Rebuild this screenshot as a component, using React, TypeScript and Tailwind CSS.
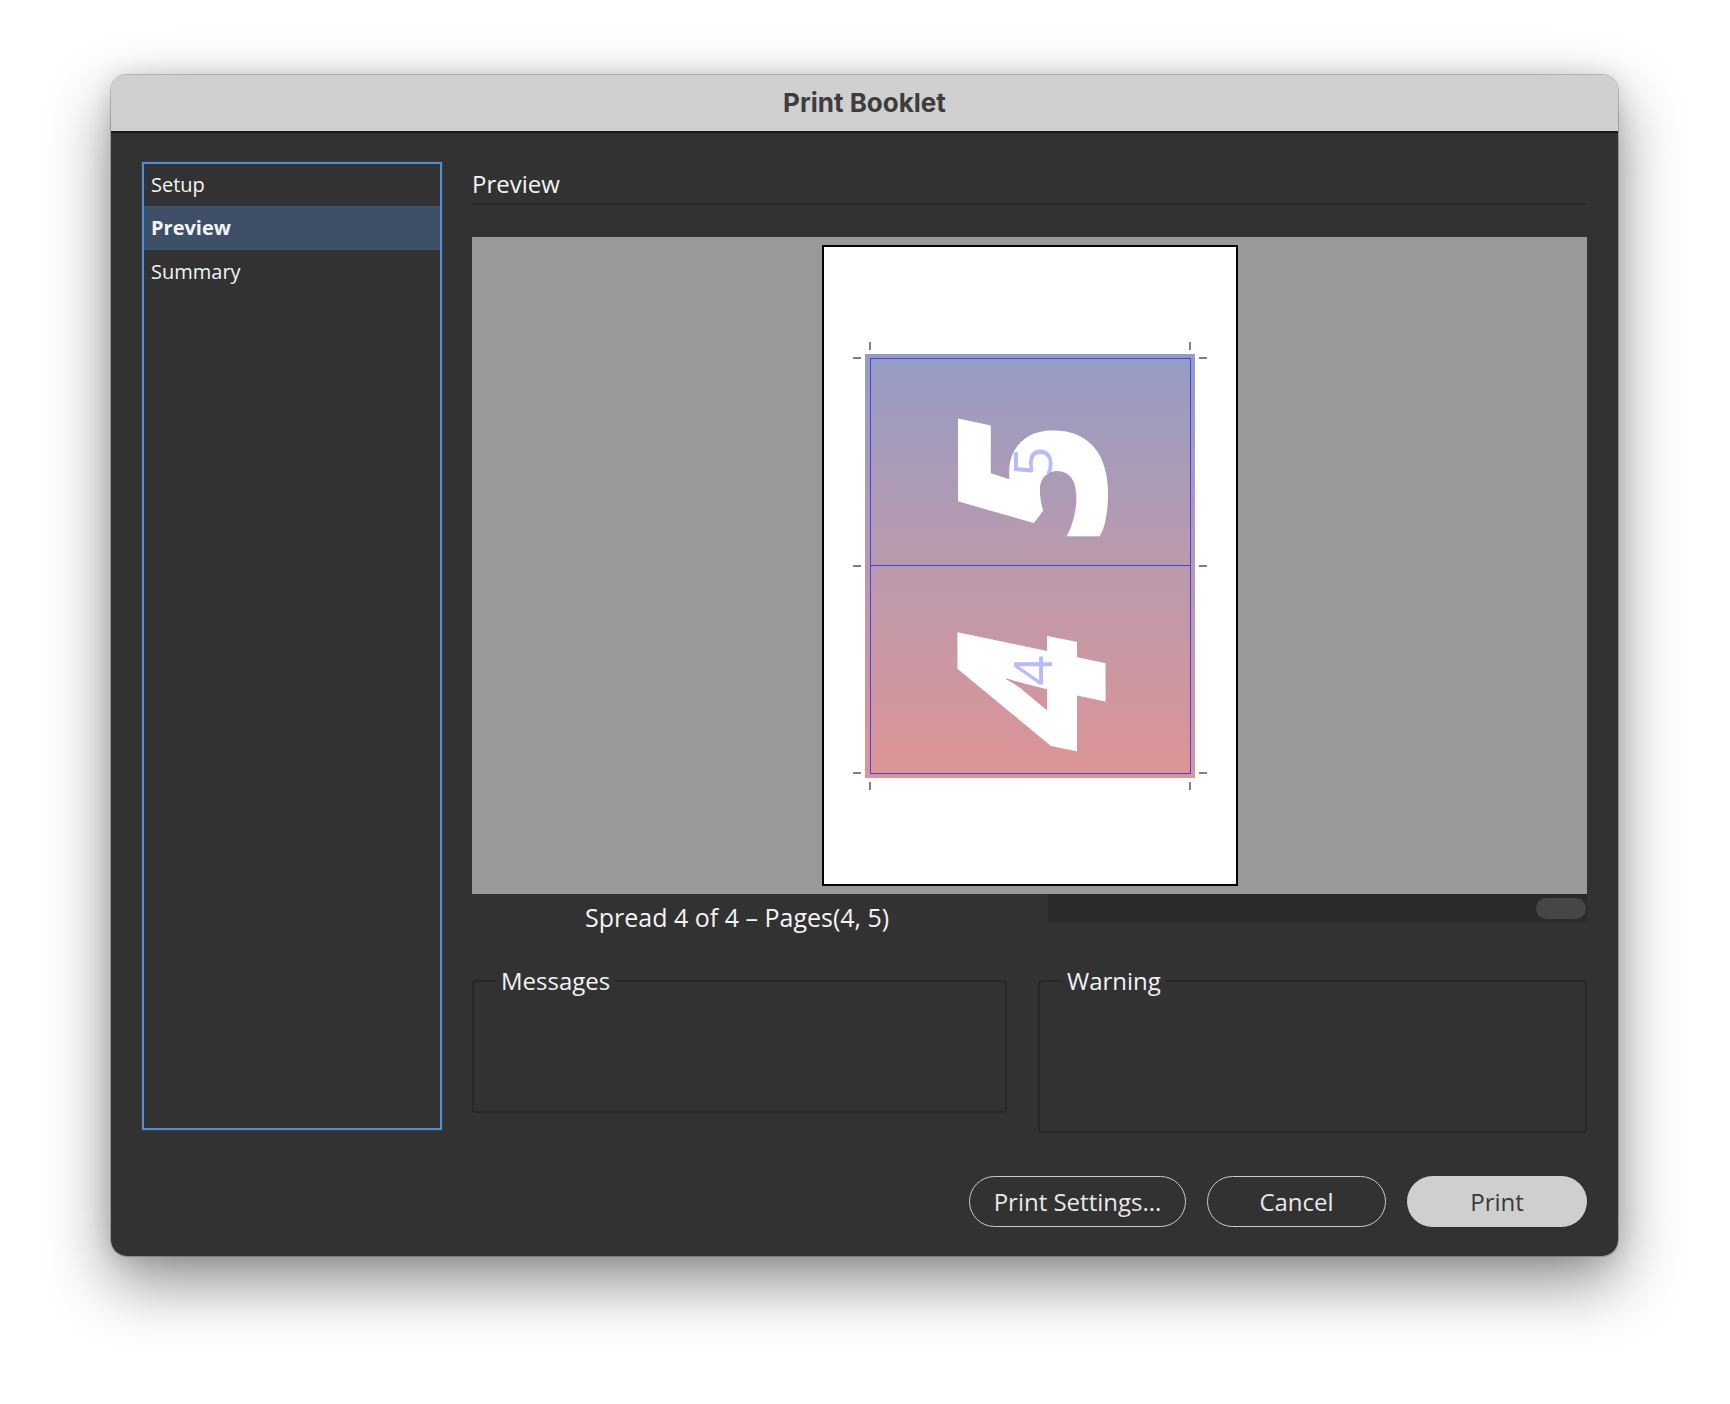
import React from "react";

const sideItems = [
  { label: "Setup", active: false, h: "h-[42px]" },
  { label: "Preview", active: true, h: "h-[44px]" },
  { label: "Summary", active: false, h: "h-[44px]" },
];

function CropMarks() {
  return (
    <>
      {/* vertical ticks, top and bottom */}
      <div className="absolute left-[4px] top-[-12px] w-[2px] h-[8px] bg-[#808080]" />
      <div className="absolute left-[324px] top-[-12px] w-[2px] h-[8px] bg-[#808080]" />
      <div className="absolute left-[4px] top-[428px] w-[2px] h-[8px] bg-[#808080]" />
      <div className="absolute left-[324px] top-[428px] w-[2px] h-[8px] bg-[#808080]" />
      {/* horizontal ticks, left and right */}
      <div className="absolute left-[-12px] top-[3px] w-[8px] h-[2px] bg-[#808080]" />
      <div className="absolute left-[-12px] top-[211px] w-[8px] h-[2px] bg-[#808080]" />
      <div className="absolute left-[-12px] top-[418px] w-[8px] h-[2px] bg-[#808080]" />
      <div className="absolute left-[334px] top-[3px] w-[8px] h-[2px] bg-[#808080]" />
      <div className="absolute left-[334px] top-[211px] w-[8px] h-[2px] bg-[#808080]" />
      <div className="absolute left-[334px] top-[418px] w-[8px] h-[2px] bg-[#808080]" />
    </>
  );
}

function SpreadPreview() {
  return (
    <div className="relative w-[330px] h-[424px] bg-linear-to-b from-[#959cc3] to-[#dd9495]">
      <CropMarks />
      {/* trim box + fold */}
      <div className="absolute left-[5px] right-[4px] top-[4px] bottom-[4px] border border-[#4242f2]" />
      <div className="absolute left-[5px] right-[4px] top-[211px] h-px bg-[#4242e6]" />

      <div className="relative h-[212px] flex items-center justify-center">
        <span className="-rotate-90 translate-x-[-3px] translate-y-[18px] text-[208px] leading-none font-extrabold italic text-white select-none">
          5
        </span>
        <span className="absolute inset-0 flex items-center justify-center">
          <span className="-rotate-90 translate-x-[2px] translate-y-[2px] text-[53px] leading-none text-[#9a9cff]/70">
            5
          </span>
        </span>
      </div>
      <div className="relative h-[212px] flex items-center justify-center">
        <span className="-rotate-90 translate-x-[-3px] translate-y-[18px] text-[208px] leading-none font-extrabold italic text-white select-none">
          4
        </span>
        <span className="absolute inset-0 flex items-center justify-center">
          <span className="-rotate-90 translate-x-[2px] translate-y-[-1px] text-[53px] leading-none text-[#9a9cff]/70">
            4
          </span>
        </span>
      </div>
    </div>
  );
}

function GroupBox({ title, className }: { title: string; className: string }) {
  return (
    <fieldset className={`border-2 border-[#272727] rounded-[4px] pl-[22px] ${className}`}>
      <legend className="px-[5px] text-[24px] leading-[24px] font-medium text-[#f2f2f2]">{title}</legend>
    </fieldset>
  );
}

export default function App() {
  return (
    <div className="min-h-screen w-full bg-white pl-[111px] pt-[75px] pb-[148px] font-['Open_Sans',sans-serif]">
      <div className="w-[1507px] h-[1181px] rounded-[16px] overflow-hidden flex flex-col shadow-[0_0_0_1px_rgba(0,0,0,0.2),0_26px_64px_rgba(0,0,0,0.45),0_0_24px_rgba(0,0,0,0.12)]">
        {/* Title bar */}
        <div className="h-[58px] shrink-0 bg-[#d0d0d0] border-b-2 border-[#1b1b1b] flex items-center justify-center">
          <span className="font-['Inter',sans-serif] text-[26px] font-bold text-[#3d3d3d] -translate-y-px">Print Booklet</span>
        </div>

        {/* Body */}
        <div className="flex-1 bg-[#323232] px-[31px] pt-[29px] flex flex-col">
          <div className="flex gap-[30px]">
            {/* Sidebar */}
            <div className="w-[300px] h-[968px] shrink-0 border-2 border-[#4a8fdc] outline outline-1 outline-[#3d3d3d] flex flex-col">
              {sideItems.map((it) => (
                <div
                  key={it.label}
                  className={`${it.h} flex items-center pl-[7px] text-[20px] text-[#f4f4f4] ${
                    it.active ? "bg-[#3d5068] font-bold" : "font-medium"
                  }`}
                >
                  {it.label}
                </div>
              ))}
            </div>

            {/* Main */}
            <div className="flex-1 flex flex-col">
              <div className="mt-[6px] pb-[3px] border-b-2 border-[#2a2a2a]">
                <span className="text-[24px] leading-[32px] font-medium text-[#f4f4f4]">Preview</span>
              </div>

              <div className="mt-[32px] h-[657px] bg-[#999999] flex justify-center pt-[8px]">
                <div className="w-[416px] h-[641px] border-2 border-black bg-white flex items-center justify-center">
                  <SpreadPreview />
                </div>
              </div>

              <div className="flex h-[40px]">
                <div className="w-[576px] pl-[113px] pt-[6px] text-[25px] leading-[34px] font-medium text-[#f4f4f4] whitespace-nowrap">
                  Spread 4 of 4 – Pages(4, 5)
                </div>
                <div className="flex-1 h-[28px] bg-[#2a2a2a] flex items-center justify-end pr-px">
                  <div className="w-[50px] h-[21px] rounded-full bg-[#464646]" />
                </div>
              </div>

              <div className="mt-[35px] flex items-start gap-[31px]">
                <GroupBox title="Messages" className="w-[535px] h-[144px]" />
                <GroupBox title="Warning" className="flex-1 h-[164px]" />
              </div>
            </div>
          </div>

          {/* Buttons */}
          <div className="mt-[43px] flex justify-end gap-[21px]">
            <button className="w-[217px] h-[51px] rounded-full border-[1.5px] border-[#cbcbcb] text-[24px] font-medium text-[#e8e8e8]">
              Print Settings...
            </button>
            <button className="w-[179px] h-[51px] rounded-full border-[1.5px] border-[#cbcbcb] text-[24px] font-medium text-[#e8e8e8]">
              Cancel
            </button>
            <button className="w-[180px] h-[51px] rounded-full bg-[#cfcfcf] text-[24px] font-medium text-[#3a3a3a]">
              Print
            </button>
          </div>
        </div>
      </div>
    </div>
  );
}
